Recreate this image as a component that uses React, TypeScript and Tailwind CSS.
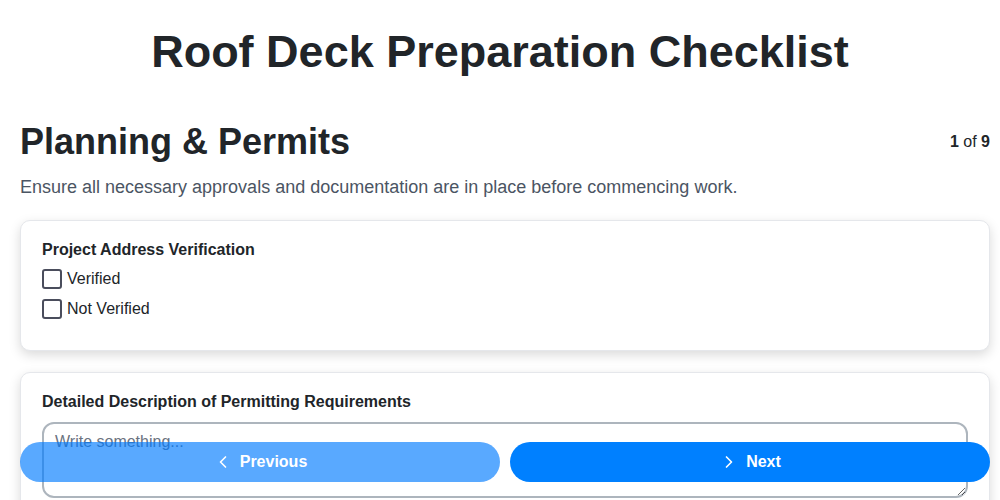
import { ChevronLeft, ChevronRight } from 'lucide-react';

const font = { fontFamily: '"Liberation Sans", Arial, sans-serif' };

function CheckOption({ label }: { label: string }) {
  return (
    <label className="flex items-center gap-[5px] h-[30px] cursor-pointer">
      <span className="w-5 h-5 rounded-[3px] border-2 border-[#4a4d5c] bg-white" />
      <span className="text-[16px] text-[#212529]">{label}</span>
    </label>
  );
}

export default function App() {
  return (
    <div className="min-h-screen bg-white text-[#212529]" style={font}>
      <h1 className="pt-[24px] text-center text-[45px] font-bold leading-[56px] text-[#212529]">
        Roof Deck Preparation Checklist
      </h1>

      <div className="pl-5 pr-[10px] mt-[39px]">
        {/* Step header */}
        <div className="flex items-start justify-between">
          <h2 className="text-[36px] font-bold leading-[46px]">Planning &amp; Permits</h2>
          <div className="mt-[11px] text-[16px]">
            <span className="font-bold">1</span> of <span className="font-bold">9</span>
          </div>
        </div>
        <p className="mt-[9px] text-[18px] leading-[26px] text-[#4b5563]">
          Ensure all necessary approvals and documentation are in place before commencing work.
        </p>

        {/* Questions */}
        <div className="mt-[20px] flex flex-col gap-[21px] pb-[100px]">
          <div className="rounded-[10px] border border-[#e5e7eb] bg-white px-[21px] pt-[19px] pb-[26px] shadow-[0_4px_12px_rgba(0,0,0,0.15)]">
            <div className="text-[16px] font-bold leading-[20px]">Project Address Verification</div>
            <div className="mt-[4px] flex flex-col">
              <CheckOption label="Verified" />
              <CheckOption label="Not Verified" />
            </div>
          </div>

          <div className="rounded-[10px] border border-[#e5e7eb] bg-white px-[21px] pt-[19px] pb-[28px] shadow-[0_4px_12px_rgba(0,0,0,0.15)]">
            <div className="text-[16px] font-bold leading-[20px]">Detailed Description of Permitting Requirements</div>
            <textarea
              className="mt-[10px] block w-full h-[76px] rounded-[12px] border-2 border-[#adb5bd] px-[11px] py-[6px] text-[16px] text-[#212529] placeholder:text-[#6b7280] outline-none"
              placeholder="Write something..."
            />
          </div>
        </div>
      </div>

      {/* Navigation */}
      <div className="fixed left-5 right-[10px] bottom-[18px] flex gap-[10px]">
        <button
          disabled
          className="flex-1 h-10 rounded-full bg-[#007bff] opacity-65 text-white font-bold text-[16px] flex items-center justify-center gap-[7px]"
        >
          <ChevronLeft className="w-5 h-5" strokeWidth={2} />
          Previous
        </button>
        <button className="flex-1 h-10 rounded-full bg-[#0080ff] text-white font-bold text-[16px] flex items-center justify-center gap-[7px]">
          <ChevronRight className="w-5 h-5" strokeWidth={2} />
          Next
        </button>
      </div>
    </div>
  );
}
